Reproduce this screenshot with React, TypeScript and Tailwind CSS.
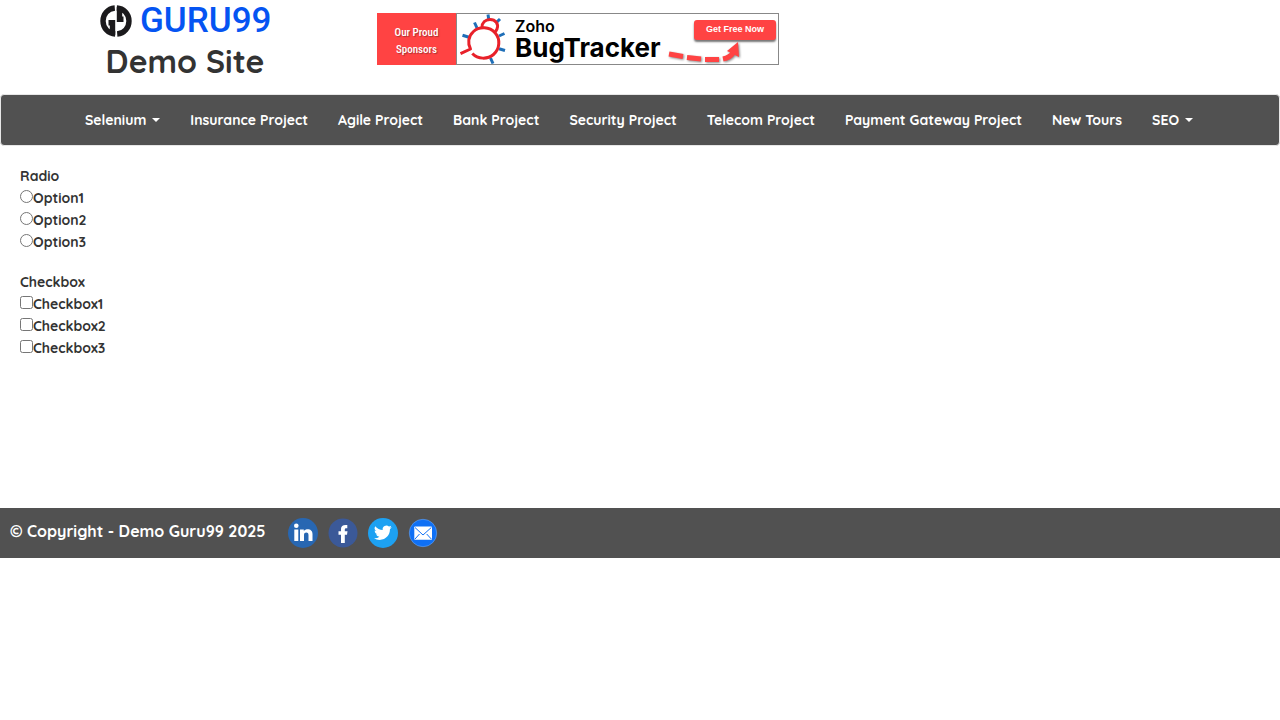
import React from "react";

type NavItem = { label: string; menu?: boolean };

const navItems: NavItem[] = [
  { label: "Selenium", menu: true },
  { label: "Insurance Project" },
  { label: "Agile Project" },
  { label: "Bank Project" },
  { label: "Security Project" },
  { label: "Telecom Project" },
  { label: "Payment Gateway Project" },
  { label: "New Tours" },
  { label: "SEO", menu: true },
];

function LogoMark() {
  return (
    <svg className="size-8" viewBox="0 0 32 32" aria-hidden="true">
      <g fill="none" stroke="#1b1a1c" strokeWidth="5.400">
        <path d="M14.800 3C7.500 3.600 3 9.500 3 16C3 23.500 8.500 28.600 15.200 29" />
        <path d="M12.500 30V17.800H8.500" />
        <path d="M17.200 29C24.500 28.400 29 22.500 29 16C29 8.500 23.500 3.400 16.800 3" />
        <path d="M19.500 2V14.200H23.500" />
      </g>
    </svg>
  );
}

function BugIcon() {
  return (
    <svg className="h-[50px] w-[50px]" viewBox="0 0 50 50" fill="none" aria-hidden="true">
      <g stroke="#1f6fb8" strokeWidth="3">
        <path d="M30 .5L30.700 5M42 5L38.500 8.300M16.500 8.500L19 14M4.500 21.200L11 23.200M46.500 19.500L41 22M41 34.700L47 36.500M32.500 44L35 49.500" />
      </g>
      <g stroke="#e8212a" strokeWidth="3">
        <path d="M24 13.500C24 8.500 27.500 5.500 32 5.500C37.500 5.500 41 10 39 15L37.300 18" />
        <path d="M14.300 39.500C20 45.500 29.500 45.500 35.500 40.500C42 35 42.500 25 37.200 19C31.500 12.600 21.500 12.200 15.500 17.500C10 22.500 9.500 29.500 12.500 35L2.500 39.700" strokeLinejoin="round" />
      </g>
    </svg>
  );
}

function SponsorBanner() {
  return (
    <a href="#sponsor" className="flex h-[52px] w-[402px] bg-white">
      <span className="flex w-[79px] shrink-0 flex-col items-center justify-center bg-[#ff4343] pt-1 font-['Roboto_Condensed','Roboto',sans-serif] text-[11px] leading-[17px] font-medium text-white [text-shadow:1px_1px_1px_#a33]">
        <span>Our Proud</span>
        <span>Sponsors</span>
      </span>
      <span className="flex flex-1 border border-[#888]">
        <span className="w-[54px] shrink-0 pl-px">
          <BugIcon />
        </span>
        <span className="flex w-[155px] shrink-0 flex-col pl-1 font-['Inter',sans-serif] text-black">
          <span className="pt-[3px] text-base leading-[18px] font-semibold">Zoho</span>
          <span className="text-[26px] leading-[26px] font-bold">BugTracker</span>
        </span>
        <span className="flex flex-1 flex-col items-end pt-1.5 pr-0.5">
          <span className="h-5 w-[82px] shrink-0 rounded-[3px] bg-[#ff4343] text-center font-['Liberation_Sans',sans-serif] text-[9px] leading-[18px] font-bold text-white shadow-[0_2px_2px_#777]">
            Get Free Now
          </span>
          <svg className="mr-8 h-6 w-[78px] shrink-0 drop-shadow-[1px_1px_1px_#888]" viewBox="0 0 78 24" fill="none" aria-hidden="true">
            <path d="M3 14L17 16.500M21 17.500L35 19M39 19.500L53 19.500M57 19Q64 17.500 67 13" stroke="#ff4343" strokeWidth="5" />
            <path d="M72 2L61 11L73 17Z" fill="#ff4343" />
          </svg>
        </span>
      </span>
    </a>
  );
}

function Caret() {
  return (
    <svg className="h-1 w-2 shrink-0" viewBox="0 0 8 4" aria-hidden="true">
      <path d="M0 0H8L4 4Z" fill="white" />
    </svg>
  );
}

function ChoiceGroup({ title, kind, options }: { title: string; kind: "radio" | "checkbox"; options: string[] }) {
  return (
    <fieldset>
      <legend className="leading-[22px]">{title}</legend>
      {options.map((option) => (
        <label key={option} className="flex h-[22px] w-fit items-start leading-[22px]">
          <input type={kind} name={kind === "radio" ? "choice" : option} className="mt-[3px] size-[13px]" />
          {option}
        </label>
      ))}
    </fieldset>
  );
}

const socials = [
  {
    name: "LinkedIn",
    art: (
      <>
        <circle cx="15" cy="15" r="15" fill="#2867b2" />
        <g fill="white">
          <circle cx="8.300" cy="7.800" r="2.300" />
          <path d="M6.300 11.500H10.300V23H6.300ZM12 11.500H15.800V13C17.800 10.200 24.500 10.300 24.500 16V23H20.500V17C20.500 13.700 16 13.900 16 17V23H12Z" />
        </g>
      </>
    ),
  },
  {
    name: "Facebook",
    art: (
      <>
        <circle cx="15" cy="15" r="14.500" fill="#3b5998" />
        <path d="M13 25V16.800H10.500V13.300H13V11C13 7.800 15.200 6.600 19.300 7.100V10.300C17.300 10.200 16.800 10.600 16.800 11.800V13.300H19.500L19 16.800H16.800V25Z" fill="white" />
      </>
    ),
  },
  {
    name: "Twitter",
    art: (
      <>
        <circle cx="15" cy="15" r="15" fill="#1da1f2" />
        <g transform="translate(6 5.800) scale(.74)">
          <path d="M23.950 4.570a10 10 0 0 1-2.820.77 4.960 4.960 0 0 0 2.160-2.720 9.900 9.900 0 0 1-3.120 1.190 4.920 4.920 0 0 0-8.380 4.480A13.900 13.900 0 0 1 1.640 3.160a4.920 4.920 0 0 0 1.520 6.570 4.900 4.900 0 0 1-2.230-.61v.06a4.920 4.920 0 0 0 3.950 4.830 5 5 0 0 1-2.210.08 4.940 4.940 0 0 0 4.600 3.420A9.870 9.870 0 0 1 0 19.540a14 14 0 0 0 7.550 2.210c9.050 0 14-7.500 14-13.980v-.64a9.900 9.900 0 0 0 2.400-2.560z" fill="white" />
        </g>
      </>
    ),
  },
  {
    name: "Email",
    art: (
      <>
        <circle cx="15" cy="15" r="13.700" fill="#0f70f5" stroke="#6aa5f0" strokeWidth=".6" />
        <rect x="6.300" y="8.500" width="17.700" height="13.200" rx=".8" fill="white" />
        <path d="M7 9.500L15 17L23.300 9.500M7 21L11.500 16M23.300 21L18.700 16" fill="none" stroke="#0f70f5" strokeWidth="1" />
      </>
    ),
  },
];

export default function App() {
  return (
    <div className="bg-white font-['Quicksand','Lato',sans-serif] text-sm font-bold text-[#333]">
      <header className="flex h-[94px] items-start pl-[100px]">
        <div className="w-[277px] shrink-0 pt-1">
          <a href="#home" className="flex h-[34px] items-center gap-2 font-['Roboto',sans-serif] text-[35px] leading-[36px] font-medium text-[#0554f2]">
            <LogoMark />
            GURU99
          </a>
          <h1 className="w-[170px] text-center text-[32px] leading-[46px] font-bold whitespace-nowrap">Demo Site</h1>
        </div>
        <div className="pt-[13px]">
          <SponsorBanner />
        </div>
      </header>

      <nav className="rounded border border-[#e7e7e7] bg-[#515151] pl-[84px] text-white">
        <ul className="flex h-[50px] items-center gap-[30px]">
          {navItems.map((item) => (
            <li key={item.label} className="shrink-0 whitespace-nowrap">
              <a href="#menu" className="flex items-center gap-1.5">
                {item.label}
                {item.menu && <Caret />}
              </a>
            </li>
          ))}
        </ul>
      </nav>

      <main className="min-h-[362px] px-5 pt-[19px]">
        <form className="flex flex-col gap-[18px]">
          <ChoiceGroup title="Radio" kind="radio" options={["Option1", "Option2", "Option3"]} />
          <ChoiceGroup title="Checkbox" kind="checkbox" options={["Checkbox1", "Checkbox2", "Checkbox3"]} />
        </form>
      </main>

      <footer className="flex h-[50px] items-center bg-[#515151] pl-2.5 text-white">
        <p className="w-[278px] pb-1 text-base">© Copyright - Demo Guru99 2025</p>
        <div className="flex gap-2.5">
          {socials.map((social) => (
            <a key={social.name} href="#social" aria-label={social.name}>
              <svg className="size-[30px]" viewBox="0 0 30 30" aria-hidden="true">
                {social.art}
              </svg>
            </a>
          ))}
        </div>
      </footer>
    </div>
  );
}
